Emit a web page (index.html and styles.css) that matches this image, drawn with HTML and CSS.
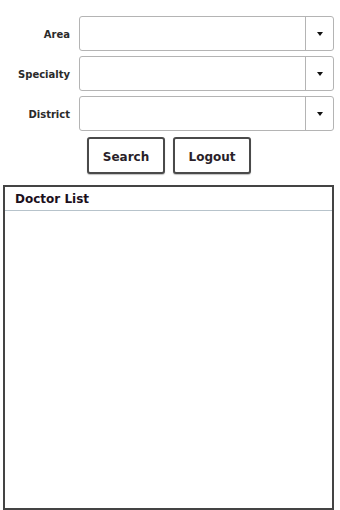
FILE: index.html
```html
<!DOCTYPE html>
<html>
<head>
<meta charset="utf-8">
<link rel="stylesheet" href="styles.css">
</head>
<body>
<div class="form">
  <label class="lbl">Area</label>
  <div class="combo"><div class="field"></div><div class="drop"><span class="arrow"></span></div></div>
  <label class="lbl">Specialty</label>
  <div class="combo"><div class="field"></div><div class="drop"><span class="arrow"></span></div></div>
  <label class="lbl">District</label>
  <div class="combo"><div class="field"></div><div class="drop"><span class="arrow"></span></div></div>
</div>
<div class="buttons">
  <button class="btn">Search</button>
  <button class="btn">Logout</button>
</div>
<div class="panel">
  <div class="panel-head">Doctor List</div>
  <div class="panel-body"></div>
</div>
</body>
</html>
```
FILE: styles.css
```css
html, body {
  margin: 0;
  padding: 0;
  background: #fff;
  font-family: "DejaVu Sans", Verdana, sans-serif;
}
.form {
  display: grid;
  grid-template-columns: 70px 255px;
  grid-auto-rows: 35px;
  column-gap: 9px;
  row-gap: 5px;
  padding-top: 16px;
}
.lbl {
  display: flex;
  align-items: center;
  justify-content: flex-end;
  font-size: 10px;
  font-weight: bold;
  color: #2a2a2a;
  padding-top: 1px;
}
.combo {
  display: flex;
  border: 1px solid #b4b4b4;
  border-radius: 3px;
  box-sizing: border-box;
  background: #fff;
}
.field {
  flex: 1;
}
.drop {
  width: 27px;
  border-left: 1px solid #b4b4b4;
  display: flex;
  align-items: center;
  justify-content: center;
}
.arrow {
  width: 0;
  height: 0;
  border-left: 3.5px solid transparent;
  border-right: 3.5px solid transparent;
  border-top: 4px solid #111;
}
.buttons {
  display: flex;
  justify-content: center;
  gap: 8px;
  margin-top: 6px;
  padding-right: 2px;
}
.btn {
  width: 78px;
  height: 37px;
  box-sizing: border-box;
  border: 2px solid #4a4a4a;
  border-radius: 3px;
  background: #fff;
  font-family: "DejaVu Sans", Verdana, sans-serif;
  font-weight: bold;
  font-size: 12px;
  color: #2a1f2a;
  box-shadow: 0 1px 1px rgba(0,0,0,0.25);
  padding: 3px 0 0 0;
}
.panel {
  margin: 11px 0 0 3px;
  width: 331px;
  height: 325px;
  box-sizing: border-box;
  border: 2px solid #444;
  display: flex;
  flex-direction: column;
}
.panel-head {
  height: 24px;
  box-sizing: border-box;
  border-bottom: 1px solid #b7c3cb;
  padding: 1px 0 0 10px;
  display: flex;
  align-items: center;
  font-size: 12px;
  font-weight: bold;
  color: #1c0f1c;
}
.panel-body {
  flex: 1;
}
```
